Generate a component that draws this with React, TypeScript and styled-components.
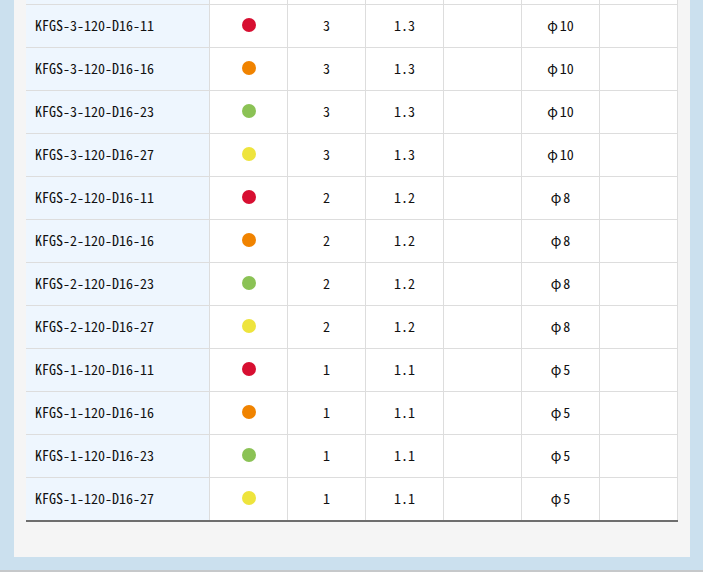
import React from "react";
import styled, { createGlobalStyle } from "styled-components";

type Color = "red" | "orange" | "green" | "yellow";

interface Product {
  code: string;
  color: Color;
  grade: string;
  ratio: string;
  size: string;
}

const dotColors: Record<Color, string> = {
  red: "#d70f31",
  orange: "#f08300",
  green: "#8bc255",
  yellow: "#eee43d",
};

const groups = [
  { n: "3", ratio: "1.3", size: "10" },
  { n: "2", ratio: "1.2", size: "8" },
  { n: "1", ratio: "1.1", size: "5" },
];

const variants: { suffix: string; color: Color }[] = [
  { suffix: "11", color: "red" },
  { suffix: "16", color: "orange" },
  { suffix: "23", color: "green" },
  { suffix: "27", color: "yellow" },
];

const products: Product[] = groups.flatMap((g) =>
  variants.map((v) => ({
    code: `KFGS-${g.n}-120-D16-${v.suffix}`,
    color: v.color,
    grade: g.n,
    ratio: g.ratio,
    size: g.size,
  }))
);

const App: React.FC = () => {
  return (
    <>
      <GlobalStyle />
      <Frame>
        <Panel>
          <Table>
            {/* tail of the row scrolled out above */}
            <Row $height={5}>
              <NameCell />
              <Cell />
              <Cell />
              <Cell />
              <Cell />
              <Cell />
              <Cell />
            </Row>
            {products.map((p, i) => {
              const last = i === products.length - 1;
              return (
                <Row key={p.code} $height={last ? 44 : 43} $last={last}>
                  <NameCell>{p.code}</NameCell>
                  <Cell>
                    <Dot $color={dotColors[p.color]} />
                  </Cell>
                  <Cell>{p.grade}</Cell>
                  <Cell>{p.ratio}</Cell>
                  <Cell />
                  <Cell>
                    <Phi>φ</Phi>
                    {p.size}
                  </Cell>
                  <Cell />
                </Row>
              );
            })}
          </Table>
        </Panel>
      </Frame>
    </>
  );
};

export default App;

const GlobalStyle = createGlobalStyle`
  html, body {
    margin: 0;
    padding: 0;
    overflow: hidden;
  }
  * {
    box-sizing: border-box;
  }
`;

const Frame = styled.div`
  width: 703px;
  height: 572px;
  background: #cbe0ee;
  padding: 0 13px 0 14px;
  border-bottom: 2px solid #c6c8ca;
`;

const Panel = styled.div`
  background: #f5f5f5;
  padding: 0 12px 35px 12px;
`;

const Table = styled.div`
  width: 652px;
  display: flex;
  flex-direction: column;
  font-family: "Noto Sans Mono CJK JP", "Liberation Mono", monospace;
  font-size: 14px;
  color: #111;
`;

const Row = styled.div<{ $height: number; $last?: boolean }>`
  display: grid;
  grid-template-columns: 184px repeat(6, 78px);
  height: ${({ $height }) => $height}px;
  border-bottom: ${({ $last }) =>
    $last ? "2px solid #6e6e6e" : "1px solid #dddddd"};
`;

const Cell = styled.div`
  display: flex;
  align-items: center;
  justify-content: center;
  padding-bottom: 2px;
  background: #ffffff;
  border-right: 1px solid #dddddd;
`;

const NameCell = styled(Cell)`
  justify-content: flex-start;
  padding-left: 9px;
  background: #eef6fe;
`;

const Phi = styled.span`
  margin-right: 2px;
`;

const Dot = styled.span<{ $color: string }>`
  display: block;
  width: 14px;
  height: 14px;
  border-radius: 50%;
  margin-left: 1px;
  background: ${({ $color }) => $color};
`;
